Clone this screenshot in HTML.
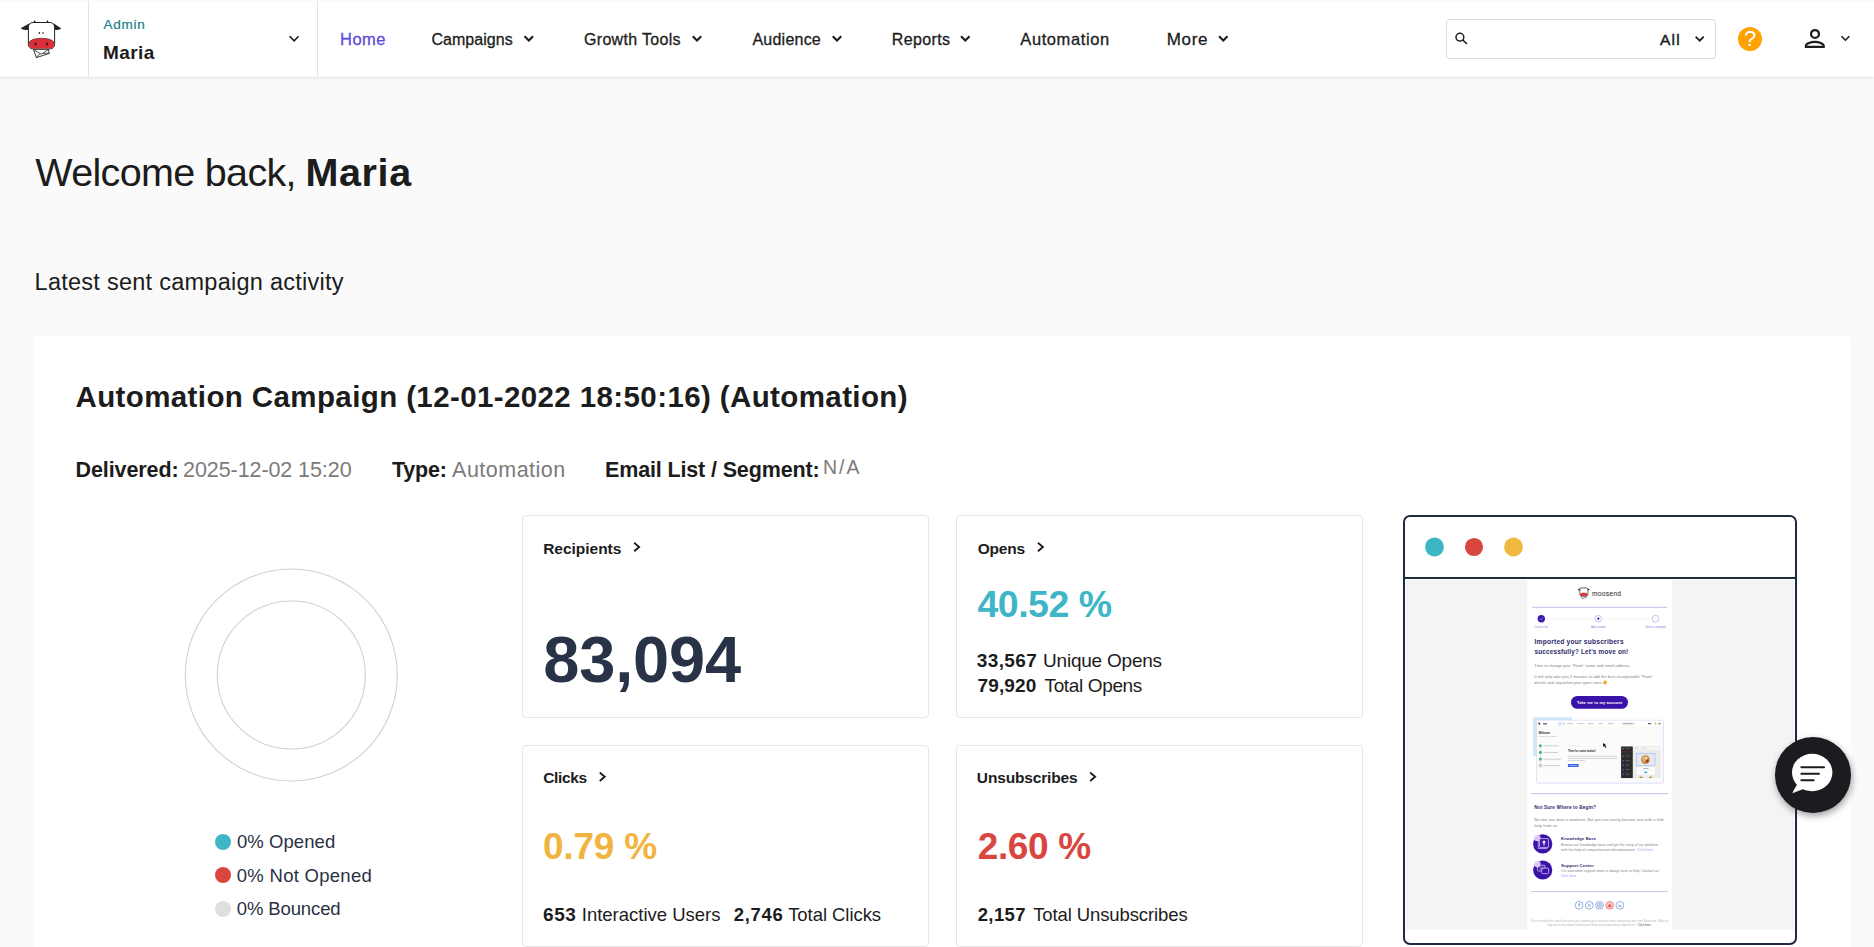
<!DOCTYPE html>
<html lang="en">
<head>
<meta charset="utf-8">
<title>Moosend - Home</title>
<style>
*{box-sizing:border-box}
html,body{margin:0;padding:0}
body{width:1874px;height:947px;overflow:hidden;background:#fafafa;font-family:"Liberation Sans",sans-serif;position:relative;color:#1c1c1c}
.abs{position:absolute}
.t{position:absolute;white-space:nowrap}
#hdr{position:absolute;left:0;top:0;width:1874px;height:77px;background:#fff;box-shadow:0 1px 2px rgba(0,0,0,.07),0 2px 5px rgba(0,0,0,.03);border-top:1px solid #fff7f5}
.vd{position:absolute;top:1px;width:1px;height:76px;background:#e2e2e2}
#search{position:absolute;left:1446px;top:19px;width:270px;height:40px;border:1px solid #dcdcdc;border-radius:3px;background:#fff}
#help{position:absolute;left:1738px;top:27px;width:24px;height:24px;border-radius:50%;background:#ffa200}
#main{position:absolute;left:34px;top:336px;width:1817px;height:640px;background:#fff;border-radius:3px}
.card{position:absolute;width:407px;height:202px;border:1px solid #e6e6e6;border-radius:4px;background:#fff}
.dot{position:absolute;width:16px;height:16px;border-radius:50%}
#frame{position:absolute;left:1403px;top:515px;width:394px;height:430px;border:2px solid #212b40;border-radius:7px;background:#fff;overflow:hidden}
#chat{position:absolute;left:1775.2px;top:737.1px;width:75.6px;height:75.6px;border-radius:50%;background:#1b1c20;box-shadow:1px 3px 7px rgba(0,0,0,.38)}
</style>
</head>
<body>
<div id="hdr"></div>
<div class="vd" style="left:88px"></div>
<div class="vd" style="left:317px"></div>
<svg class="abs" style="left:16px;top:16px" width="50" height="46" viewBox="16 16 50 46">
<path d="M29.6 23.2 L20.6 28.3 Q23 30.4 28.2 29.8 Z" fill="#222"/>
<path d="M53.4 23.2 L61.4 28.6 Q59 30.4 54.8 29.8 Z" fill="#222"/>
<path d="M33.1 22.6 Q34.2 21.6 34.5 19.9 Q35.6 21.6 36.4 22.6 Z M45.9 22.6 Q46.9 21.6 47.4 19.9 Q48.2 21.6 49.2 22.6 Z" fill="#222"/>
<path d="M33.4 49.2 L36.4 57.6 L49.4 53.4 L48.2 49.2 Z" fill="#fff" stroke="#222" stroke-width="0.9" stroke-linejoin="round"/>
<path d="M34.2 50 L41.2 54.2 L48.4 49.6 M36.4 57.4 L40.2 53.6 M49.2 53.2 L42.6 53.4" fill="none" stroke="#222" stroke-width="0.8"/>
<rect x="28.4" y="22.5" width="26.2" height="26.4" rx="4.5" ry="4.5" fill="#fff" stroke="#222" stroke-width="1"/>
<path d="M28.9 43.5 C28.9 36.6 54.1 36.6 54.1 43.5 L54.1 44.6 Q54.1 48.4 50 48.4 L33 48.4 Q28.9 48.4 28.9 44.6 Z" fill="#dc3039"/>
<path d="M28.9 43.2 C29.4 36.6 53.6 36.6 54.1 43.2" fill="none" stroke="#4a1a1c" stroke-width="0.6"/>
<ellipse cx="35.6" cy="44" rx="1" ry="1.6" fill="#3a1414" transform="rotate(-20 35.6 44)"/>
<ellipse cx="47" cy="44" rx="1" ry="1.6" fill="#3a1414" transform="rotate(20 47 44)"/>
<ellipse cx="39.4" cy="33" rx="0.7" ry="0.9" fill="#222"/>
<ellipse cx="43" cy="33" rx="0.7" ry="0.9" fill="#222"/>
</svg>

<div id="search"></div>
<svg class="abs" style="left:1452px;top:30px" width="18" height="18" viewBox="1452 30 18 18"><circle cx="1459.9" cy="37.2" r="3.9" fill="none" stroke="#1c1c1c" stroke-width="1.5"/><path d="M1462.8 40 L1467 44" stroke="#1c1c1c" stroke-width="1.6" stroke-linecap="butt"/></svg>

<div id="help"></div>
<span class="t" style="left:1738px;top:27px;width:24px;height:24px;text-align:center;font:400 22px/24.5px 'Liberation Sans',sans-serif;color:#fff">?</span>

<svg class="abs" style="left:1800px;top:26px" width="30" height="26" viewBox="1800 26 30 26"><circle cx="1815" cy="33.95" r="3.95" fill="none" stroke="#1c1c1c" stroke-width="2.25"/><path d="M1805.85 46.85 L1805.85 45.7 C1805.85 43.6 1811 41.85 1814.8 41.85 C1818.6 41.85 1823.75 43.6 1823.75 45.7 L1823.75 46.85 Z" fill="none" stroke="#1c1c1c" stroke-width="2.1" stroke-linejoin="miter"/></svg>

<div id="main"></div>
<svg class="abs" style="left:180px;top:563px" width="224" height="224" viewBox="180 563 224 224"><circle cx="291.3" cy="675" r="106" fill="none" stroke="#cfd2d2" stroke-width="1.1"/><circle cx="291.3" cy="675" r="74" fill="none" stroke="#cfd2d2" stroke-width="1.1"/></svg>

<div class="dot" style="left:215px;top:834px;background:#40b5c6"></div>
<div class="dot" style="left:215px;top:867px;background:#d9463f"></div>
<div class="dot" style="left:215px;top:901px;background:#dfdfdf"></div>
<div class="card" style="left:522px;top:515px;height:203px"></div>
<div class="card" style="left:956px;top:515px;height:203px"></div>
<div class="card" style="left:522px;top:745px"></div>
<div class="card" style="left:956px;top:745px"></div>
<div id="frame"></div>
<svg class="abs" style="left:1405px;top:517px" width="390" height="426" viewBox="1405 517 390 426" font-family="'Liberation Sans',sans-serif">
<circle cx="1434.50" cy="547.00" r="9.40" fill="#3fb6c6"/>
<circle cx="1474.00" cy="547.00" r="9.10" fill="#d9463f"/>
<circle cx="1513.50" cy="547.00" r="9.40" fill="#f0b840"/>
<rect x="1405.00" y="577.00" width="390.00" height="2.00" fill="#212b40"/>
<rect x="1406.00" y="580.00" width="388.00" height="349.70" fill="#f4f4f4"/>
<rect x="1527.20" y="580.00" width="144.80" height="349.70" fill="#ffffff"/>
<g transform="translate(1577.3,586.9) scale(0.305)"><g transform="translate(-20,-19)"><path d="M29.6 23.200 L20.6 28.300 Q23 30.400 28.200 29.800 Z M53.4 23.200 L61.4 28.600 Q59 30.400 54.800 29.800 Z M33.6 22.400 L34.6 20 L35.9 22.400 Z M46.2 22.400 L47.3 20 L48.6 22.400 Z" fill="#222"/><path d="M33.4 49.200 L36.4 57.600 L49.4 53.400 L48.2 49.200 Z" fill="#fff" stroke="#222" stroke-width="1.6"/><rect x="28.400" y="22.500" width="26.200" height="26.400" rx="4.500" fill="#fff" stroke="#222" stroke-width="2.2"/><path d="M28.900 43.500 C28.900 36.500 54.100 36.500 54.100 43.500 L54.100 44.600 Q54.100 48.400 50 48.400 L33 48.400 Q28.900 48.400 28.900 44.600 Z" fill="#dc3039"/></g></g>
<text transform="translate(1591.90 595.80) scale(0.1250)" font-size="53.94" fill="#222" font-weight="400" textLength="233.60" lengthAdjust="spacing">moosend</text>
<rect x="1532.00" y="606.70" width="135.00" height="1.20" fill="#cfc5f5"/>
<path d="M1547.50 618.70 L1592.00 618.70" stroke="#ebebeb" stroke-width="0.70" fill="none"/>
<path d="M1604.50 618.70 L1649.00 618.70" stroke="#ebebeb" stroke-width="0.70" fill="none"/>
<circle cx="1541.30" cy="618.70" r="3.70" fill="#3a18ae"/>
<path d="M1539.7 618.8 L1540.9 620 L1543 617.6" stroke="#b9a8f0" stroke-width="0.6" fill="none"/>
<circle cx="1598.30" cy="618.70" r="3.40" fill="#fff" stroke="#b7a6ee" stroke-width="0.70"/>
<circle cx="1598.30" cy="618.70" r="1.10" fill="#3a18ae"/>
<circle cx="1655.50" cy="618.70" r="3.40" fill="#fff" stroke="#b7a6ee" stroke-width="0.70"/>
<text transform="translate(1534.30 627.60) scale(0.1250)" font-size="20.40" fill="#8f7fe3" font-weight="400" textLength="109.60" lengthAdjust="spacing">Create a list</text>
<text transform="translate(1590.90 627.60) scale(0.1250)" font-size="20.40" fill="#8f7fe3" font-weight="400" textLength="120.00" lengthAdjust="spacing">Add a sender</text>
<text transform="translate(1645.20 627.60) scale(0.1250)" font-size="20.40" fill="#8f7fe3" font-weight="400" textLength="165.60" lengthAdjust="spacing">Send a campaign</text>
<text transform="translate(1534.50 643.80) scale(0.1250)" font-size="53.45" fill="#2b2a6b" font-weight="700" textLength="712.80" lengthAdjust="spacing">Imported your subscribers</text>
<text transform="translate(1534.50 653.90) scale(0.1250)" font-size="51.20" fill="#2b2a6b" font-weight="700" textLength="749.60" lengthAdjust="spacing">successfully? Let&#x27;s move on!</text>
<text transform="translate(1534.30 666.60) scale(0.1250)" font-size="30.65" fill="#7d7d7d" font-weight="400" textLength="771.20" lengthAdjust="spacing">Time to change your &quot;From&quot; name and email address.</text>
<text transform="translate(1534.30 678.10) scale(0.1250)" font-size="30.93" fill="#7d7d7d" font-weight="400" textLength="949.60" lengthAdjust="spacing">It will only take you 2 minutes to add the best recognizable &quot;From&quot;</text>
<text transform="translate(1534.30 683.70) scale(0.1250)" font-size="30.92" fill="#7d7d7d" font-weight="400" textLength="539.20" lengthAdjust="spacing">details and skyrocket your open rates</text>
<circle cx="1605.00" cy="682.50" r="1.90" fill="#f3a63a"/>
<rect x="1571.00" y="696.00" width="57.00" height="12.80" fill="#3a12a8" rx="6.40"/>
<text transform="translate(1577.00 704.20) scale(0.1250)" font-size="31.20" fill="#ffffff" font-weight="700" textLength="360.80" lengthAdjust="spacing">Take me to my account</text>
<rect x="1533.00" y="717.20" width="38.90" height="39.20" fill="#cfe8fc" rx="1.60"/>
<rect x="1536.60" y="720.30" width="126.80" height="62.90" fill="#fbfbfb" rx="1.20" stroke="#ddd6fa" stroke-width="0.80"/>
<rect x="1537.00" y="720.70" width="126.00" height="6.10" fill="#ffffff"/>
<path d="M1537.00 726.90 L1663.00 726.90" stroke="#efefef" stroke-width="0.30" fill="none"/>
<circle cx="1539.30" cy="723.60" r="1.10" fill="#6b3a3a"/>
<rect x="1543.00" y="723.20" width="4.00" height="1.20" fill="#555"/>
<rect x="1558.00" y="722.20" width="3.20" height="3.10" fill="#cfe0fb"/>
<rect x="1561.80" y="722.20" width="3.20" height="3.10" fill="#dfe9fb"/>
<rect x="1566.70" y="723.30" width="6.30" height="0.80" fill="#bdbdbd"/>
<rect x="1577.00" y="723.30" width="7.50" height="0.80" fill="#bdbdbd"/>
<rect x="1587.50" y="723.30" width="6.00" height="0.80" fill="#bdbdbd"/>
<rect x="1598.00" y="723.30" width="5.00" height="0.80" fill="#bdbdbd"/>
<rect x="1608.00" y="723.30" width="6.00" height="0.80" fill="#bdbdbd"/>
<rect x="1622.00" y="722.20" width="13.00" height="3.00" fill="#f4f4f4" rx="0.40" stroke="#e2e2e2" stroke-width="0.20"/>
<rect x="1623.00" y="723.30" width="10.00" height="0.80" fill="#9a9a9a"/>
<rect x="1648.00" y="723.00" width="3.00" height="1.30" fill="#666"/>
<circle cx="1655.60" cy="723.70" r="0.90" fill="#f5a623"/>
<rect x="1658.40" y="723.00" width="2.20" height="1.40" fill="#777"/>
<text transform="translate(1538.80 733.60) scale(0.1250)" font-size="21.08" fill="#222" font-weight="700" textLength="89.60" lengthAdjust="spacing">Welcome</text>
<text transform="translate(1538.80 736.90) scale(0.1250)" font-size="12.92" fill="#999" font-weight="400" textLength="145.60" lengthAdjust="spacing">Let&#x27;s help you get started!</text>
<path d="M1540.40 745.80 L1540.40 765.60" stroke="#9fb7d9" stroke-width="0.30" fill="none"/>
<circle cx="1540.40" cy="745.80" r="1.55" fill="#4db37e"/>
<circle cx="1540.40" cy="752.40" r="1.55" fill="#4db37e"/>
<circle cx="1540.40" cy="759.10" r="1.55" fill="#4db37e"/>
<circle cx="1540.40" cy="765.60" r="1.30" fill="#f4f4f4" stroke="#777" stroke-width="0.50"/>
<rect x="1543.20" y="745.45" width="15.80" height="0.80" fill="#c4c4c4"/>
<rect x="1543.20" y="752.05" width="14.80" height="0.80" fill="#c4c4c4"/>
<rect x="1543.20" y="758.75" width="17.80" height="0.80" fill="#c4c4c4"/>
<rect x="1543.20" y="765.25" width="16.30" height="0.80" fill="#c4c4c4"/>
<rect x="1568.00" y="745.60" width="13.00" height="0.70" fill="#e6e6e6"/>
<text transform="translate(1567.90 751.60) scale(0.1250)" font-size="22.44" fill="#2a2a2a" font-weight="700" textLength="223.20" lengthAdjust="spacing">Time for some action!</text>
<rect x="1567.90" y="755.85" width="49.10" height="0.75" fill="#c9c9c9"/>
<rect x="1567.90" y="757.95" width="49.70" height="0.75" fill="#c9c9c9"/>
<rect x="1567.90" y="759.95" width="17.40" height="0.75" fill="#c9c9c9"/>
<rect x="1567.90" y="764.00" width="10.70" height="3.00" fill="#3d63e6" rx="0.30"/>
<rect x="1569.20" y="765.20" width="8.00" height="0.60" fill="#c9d4fb"/>
<path d="M1603 742.9 L1603 746.9 L1604.1 745.9 L1605.7 748 L1606.5 747.4 L1605 745.4 L1606.6 745.2 Z" fill="#1a1a1a"/>
<rect x="1620.60" y="746.00" width="39.80" height="32.60" fill="#000" rx="0.60" opacity="0.10"/>
<rect x="1621.10" y="746.40" width="38.80" height="31.60" fill="#ececec" rx="0.40"/>
<rect x="1621.10" y="746.40" width="11.70" height="31.60" fill="#2b2b2d" rx="0.40"/>
<rect x="1622.60" y="748.00" width="1.40" height="1.10" fill="#3f74c9"/>
<rect x="1625.50" y="748.20" width="4.00" height="0.60" fill="#777"/>
<rect x="1622.60" y="751.10" width="1.40" height="1.10" fill="#3f74c9"/>
<rect x="1625.50" y="751.30" width="4.00" height="0.60" fill="#777"/>
<rect x="1622.60" y="755.50" width="1.40" height="1.10" fill="#3f74c9"/>
<rect x="1625.50" y="755.70" width="4.00" height="0.60" fill="#777"/>
<rect x="1622.60" y="760.10" width="1.40" height="1.10" fill="#3f74c9"/>
<rect x="1625.50" y="760.30" width="4.00" height="0.60" fill="#777"/>
<rect x="1622.60" y="764.50" width="1.40" height="1.10" fill="#3f74c9"/>
<rect x="1625.50" y="764.70" width="4.00" height="0.60" fill="#777"/>
<rect x="1622.60" y="769.00" width="1.40" height="1.10" fill="#3f74c9"/>
<rect x="1625.50" y="769.20" width="4.00" height="0.60" fill="#777"/>
<rect x="1622.60" y="773.50" width="1.40" height="1.10" fill="#3f74c9"/>
<rect x="1625.50" y="773.70" width="4.00" height="0.60" fill="#777"/>
<rect x="1622.00" y="750.60" width="9.00" height="2.00" fill="#4a2a2a"/>
<rect x="1633.00" y="746.60" width="26.60" height="3.20" fill="#f6f6f6"/>
<rect x="1634.50" y="747.80" width="4.00" height="0.70" fill="#f2b36a"/>
<rect x="1641.00" y="747.80" width="5.00" height="0.70" fill="#c9c9c9"/>
<rect x="1636.20" y="753.20" width="18.80" height="12.60" fill="#e3e8f4" stroke="#8fb0ee" stroke-width="0.50"/>
<circle cx="1645.40" cy="759.60" r="4.40" fill="#c98a3a"/>
<circle cx="1644.60" cy="758.80" r="2.60" fill="#e0b060"/>
<circle cx="1647.20" cy="761.00" r="1.50" fill="#7b4a22"/>
<circle cx="1646.20" cy="758.00" r="1.20" fill="#f0e3c9"/>
<rect x="1636.80" y="767.40" width="18.20" height="7.20" fill="#ffffff"/>
<rect x="1643.20" y="768.20" width="5.40" height="0.60" fill="#888"/>
<rect x="1638.50" y="770.00" width="15.00" height="0.40" fill="#ddd"/>
<rect x="1644.20" y="771.60" width="3.20" height="1.60" fill="#3fb6c6"/>
<circle cx="1641.00" cy="778.20" r="1.80" fill="#b5802f"/>
<circle cx="1650.60" cy="778.20" r="1.80" fill="#b5802f"/>
<rect x="1633.00" y="778.00" width="27.00" height="2.00" fill="#fbfbfb"/>
<rect x="1531.00" y="793.00" width="137.00" height="1.20" fill="#cfc5f5"/>
<text transform="translate(1534.30 808.90) scale(0.1250)" font-size="37.85" fill="#2b2a6b" font-weight="700" textLength="493.60" lengthAdjust="spacing">Not Sure Where to Begin?</text>
<text transform="translate(1534.30 821.00) scale(0.1250)" font-size="30.84" fill="#7d7d7d" font-weight="400" textLength="1037.60" lengthAdjust="spacing">No one was born a marketer. But you can easily become one with a little</text>
<text transform="translate(1534.30 826.80) scale(0.1250)" font-size="31.42" fill="#7d7d7d" font-weight="400" textLength="191.20" lengthAdjust="spacing">help from us.</text>
<circle cx="1542.70" cy="843.90" r="9.60" fill="#3a12a8"/>
<circle cx="1537.30" cy="838.00" r="3.3" fill="#ecd2fb" opacity="0.92"/>
<circle cx="1542.70" cy="870.00" r="9.60" fill="#3a12a8"/>
<circle cx="1537.30" cy="864.10" r="3.3" fill="#ecd2fb" opacity="0.92"/>
<rect x="1538.30" y="839.60" width="8.90" height="9.00" fill="none" rx="0.50" stroke="#e9dcfb" stroke-width="0.70"/>
<rect x="1539.60" y="838.60" width="8.80" height="8.80" fill="#3a12a8" rx="0.50" stroke="#e9dcfb" stroke-width="0.70"/>
<circle cx="1544.00" cy="842.00" r="1.60" fill="#e9dcfb"/>
<rect x="1543.40" y="843.20" width="1.20" height="2.40" fill="#e9dcfb"/>
<rect x="1537.40" y="865.20" width="7.60" height="5.80" fill="none" rx="1.00" stroke="#e9dcfb" stroke-width="0.70"/>
<rect x="1541.60" y="868.20" width="7.00" height="5.40" fill="#3a12a8" rx="1.00" stroke="#e9dcfb" stroke-width="0.70"/>
<path d="M1539.00 867.20 L1543.50 867.20" stroke="#e9dcfb" stroke-width="0.50" fill="none"/>
<path d="M1539.00 869.00 L1543.50 869.00" stroke="#e9dcfb" stroke-width="0.50" fill="none"/>
<text transform="translate(1561.00 840.40) scale(0.1250)" font-size="33.24" fill="#2b2a6b" font-weight="700" textLength="280.00" lengthAdjust="spacing">Knowledge Base</text>
<text transform="translate(1561.00 846.10) scale(0.1250)" font-size="27.17" fill="#7d7d7d" font-weight="400" textLength="774.40" lengthAdjust="spacing">Browse our knowledge base and get the hang of our platform</text>
<text transform="translate(1561.00 851.00) scale(0.1250)" font-size="27.12" fill="#7d7d7d" font-weight="400" textLength="596.80" lengthAdjust="spacing">with the help of comprehensive documentation.</text>
<text transform="translate(1637.00 851.00) scale(0.1250)" font-size="27.01" fill="#b58cf0" font-weight="400" textLength="126.40" lengthAdjust="spacing">Click here</text>
<text transform="translate(1561.00 866.60) scale(0.1250)" font-size="34.25" fill="#2b2a6b" font-weight="700" textLength="262.40" lengthAdjust="spacing">Support Center</text>
<text transform="translate(1561.00 872.40) scale(0.1250)" font-size="26.86" fill="#7d7d7d" font-weight="400" textLength="787.20" lengthAdjust="spacing">Our awesome support team is always here to help. Contact us!</text>
<text transform="translate(1561.00 877.20) scale(0.1250)" font-size="25.98" fill="#b58cf0" font-weight="400" textLength="121.60" lengthAdjust="spacing">Click here</text>
<rect x="1531.00" y="891.00" width="137.00" height="1.10" fill="#cfc5f5"/>
<circle cx="1579.10" cy="905.30" r="3.90" fill="#fff" stroke="#4f7fc9" stroke-width="0.60"/>
<circle cx="1589.30" cy="905.30" r="3.90" fill="#fff" stroke="#4f7fc9" stroke-width="0.60"/>
<circle cx="1599.50" cy="905.30" r="3.90" fill="#fff" stroke="#4f7fc9" stroke-width="0.60"/>
<circle cx="1609.70" cy="905.30" r="3.90" fill="#f6c9c4" stroke="#e25a4e" stroke-width="0.60"/>
<circle cx="1619.90" cy="905.30" r="3.90" fill="#fff" stroke="#4f7fc9" stroke-width="0.60"/>
<text transform="translate(1578.30 907.10) scale(0.1250)" font-size="36.51" fill="#4f7fc9" font-weight="700" textLength="12.80" lengthAdjust="spacing">f</text>
<path d="M1587.6 903.6 L1591 907 M1591 903.6 L1587.6 907" stroke="#4f7fc9" stroke-width="0.6"/>
<rect x="1597.60" y="903.40" width="3.80" height="3.80" fill="none" rx="1.00" stroke="#4f7fc9" stroke-width="0.60"/>
<circle cx="1599.50" cy="905.30" r="0.90" fill="none" stroke="#4f7fc9" stroke-width="0.50"/>
<path d="M1607.6 907 L1609.7 903.4 L1611.8 907 Z" fill="#e25a4e"/>
<text transform="translate(1618.20 906.90) scale(0.1250)" font-size="29.08" fill="#4f7fc9" font-weight="700" textLength="27.20" lengthAdjust="spacing">in</text>
<text transform="translate(1530.80 921.80) scale(0.1250)" font-size="23.05" fill="#b4b4b4" font-weight="400" textLength="1097.60" lengthAdjust="spacing">You received this email because you signed up to receive email marketing tips from Moosend. Want to</text>
<text transform="translate(1547.00 926.20) scale(0.1250)" font-size="22.90" fill="#b4b4b4" font-weight="400" textLength="716.80" lengthAdjust="spacing">stop receiving emails about your Moosend onboarding experience?</text>
<text transform="translate(1638.00 926.20) scale(0.1250)" font-size="21.56" fill="#333" font-weight="400" textLength="107.20" lengthAdjust="spacing">Click here.</text>
</svg>
<div id="chat"></div>
<svg class="abs" style="left:1785px;top:748px" width="56" height="52" viewBox="1785 748 56 52"><ellipse cx="1812.2" cy="772.5" rx="20.2" ry="18.8" fill="#fff"/><path d="M1795.2 781 L1797.6 784.2 L1792.9 792.6 L1803.5 788.6 L1806.5 790.2 Z" fill="#fff" stroke="#fff" stroke-width="0.8" stroke-linejoin="round"/><path d="M1801.4 767.2 H1824 M1801.4 773.8 H1818.9 M1801.4 780.2 H1813.6" stroke="#1b1c20" stroke-width="2.1" stroke-linecap="round" fill="none"/></svg>

<svg class="abs" style="left:287px;top:33px" width="16" height="12" viewBox="0 0 16 12"><path d="M3.20 3.85 L7.10 7.75 L11.00 3.85" fill="none" stroke="#1c1c1c" stroke-width="1.60" stroke-linecap="square" stroke-linejoin="miter"/></svg>
<svg class="abs" style="left:522px;top:33px" width="15" height="12" viewBox="0 0 15 12"><path d="M3.30 3.95 L6.80 7.45 L10.30 3.95" fill="none" stroke="#1c1c1c" stroke-width="2.10" stroke-linecap="square" stroke-linejoin="miter"/></svg>
<svg class="abs" style="left:690px;top:33px" width="15" height="12" viewBox="0 0 15 12"><path d="M3.50 3.95 L7.00 7.45 L10.50 3.95" fill="none" stroke="#1c1c1c" stroke-width="2.10" stroke-linecap="square" stroke-linejoin="miter"/></svg>
<svg class="abs" style="left:830px;top:33px" width="15" height="12" viewBox="0 0 15 12"><path d="M3.50 3.95 L7.00 7.45 L10.50 3.95" fill="none" stroke="#1c1c1c" stroke-width="2.10" stroke-linecap="square" stroke-linejoin="miter"/></svg>
<svg class="abs" style="left:958px;top:33px" width="15" height="12" viewBox="0 0 15 12"><path d="M3.80 3.95 L7.30 7.45 L10.80 3.95" fill="none" stroke="#1c1c1c" stroke-width="2.10" stroke-linecap="square" stroke-linejoin="miter"/></svg>
<svg class="abs" style="left:1216px;top:33px" width="15" height="12" viewBox="0 0 15 12"><path d="M3.80 3.95 L7.30 7.45 L10.80 3.95" fill="none" stroke="#1c1c1c" stroke-width="2.10" stroke-linecap="square" stroke-linejoin="miter"/></svg>
<svg class="abs" style="left:1693px;top:34px" width="15" height="12" viewBox="0 0 15 12"><path d="M3.30 3.30 L6.70 6.70 L10.10 3.30" fill="none" stroke="#1c1c1c" stroke-width="1.80" stroke-linecap="square" stroke-linejoin="miter"/></svg>
<svg class="abs" style="left:1839px;top:33px" width="15" height="12" viewBox="0 0 15 12"><path d="M3.00 3.80 L6.40 7.20 L9.80 3.80" fill="none" stroke="#1c1c1c" stroke-width="1.60" stroke-linecap="square" stroke-linejoin="miter"/></svg>
<svg class="abs" style="left:631px;top:540px" width="13" height="16" viewBox="0 0 13 16"><path d="M3.90 3.45 L8.10 7.05 L3.90 10.65" fill="none" stroke="#1c1c1c" stroke-width="1.90" stroke-linecap="square" stroke-linejoin="miter"/></svg>
<svg class="abs" style="left:1035px;top:540px" width="13" height="16" viewBox="0 0 13 16"><path d="M3.70 3.45 L7.90 7.05 L3.70 10.65" fill="none" stroke="#1c1c1c" stroke-width="1.90" stroke-linecap="square" stroke-linejoin="miter"/></svg>
<svg class="abs" style="left:597px;top:770px" width="13" height="16" viewBox="0 0 13 16"><path d="M3.50 3.10 L7.70 6.70 L3.50 10.30" fill="none" stroke="#1c1c1c" stroke-width="1.90" stroke-linecap="square" stroke-linejoin="miter"/></svg>
<svg class="abs" style="left:1087px;top:770px" width="13" height="16" viewBox="0 0 13 16"><path d="M3.90 3.10 L8.10 6.70 L3.90 10.30" fill="none" stroke="#1c1c1c" stroke-width="1.90" stroke-linecap="square" stroke-linejoin="miter"/></svg>
<span class="t" style="left:103.56px;top:17.57px;font:400 13.5px/13.5px 'Liberation Sans',sans-serif;letter-spacing:0.750px;color:#17808a;-webkit-text-stroke:0.2px #17808a">Admin</span>
<span class="t" style="left:102.89px;top:42.62px;font:700 19.0px/19.0px 'Liberation Sans',sans-serif;letter-spacing:0.450px;color:#1c1c1c">Maria</span>
<span class="t" style="left:340.11px;top:31.03px;font:400 16.5px/16.5px 'Liberation Sans',sans-serif;letter-spacing:0.400px;color:#5b4cdb;-webkit-text-stroke:0.3px #5b4cdb">Home</span>
<span class="t" style="left:431.39px;top:32.46px;font:400 16.0px/16.0px 'Liberation Sans',sans-serif;letter-spacing:0.050px;color:#1c1c1c;-webkit-text-stroke:0.3px #1c1c1c">Campaigns</span>
<span class="t" style="left:584.02px;top:32.46px;font:400 16.0px/16.0px 'Liberation Sans',sans-serif;letter-spacing:0.309px;color:#1c1c1c;-webkit-text-stroke:0.3px #1c1c1c">Growth Tools</span>
<span class="t" style="left:752.44px;top:32.46px;font:400 16.0px/16.0px 'Liberation Sans',sans-serif;letter-spacing:0.229px;color:#1c1c1c;-webkit-text-stroke:0.3px #1c1c1c">Audience</span>
<span class="t" style="left:891.87px;top:32.46px;font:400 16.0px/16.0px 'Liberation Sans',sans-serif;letter-spacing:0.367px;color:#1c1c1c;-webkit-text-stroke:0.3px #1c1c1c">Reports</span>
<span class="t" style="left:1020.29px;top:31.03px;font:400 16.5px/16.5px 'Liberation Sans',sans-serif;letter-spacing:0.600px;color:#1c1c1c;-webkit-text-stroke:0.3px #1c1c1c">Automation</span>
<span class="t" style="left:1166.72px;top:30.61px;font:400 17.0px/17.0px 'Liberation Sans',sans-serif;letter-spacing:0.667px;color:#1c1c1c;-webkit-text-stroke:0.3px #1c1c1c">More</span>
<span class="t" style="left:1660.04px;top:32.08px;font:400 15.5px/15.5px 'Liberation Sans',sans-serif;letter-spacing:1.200px;color:#1c1c1c;-webkit-text-stroke:0.45px #1c1c1c">All</span>
<span class="t" style="left:35.25px;top:153.46px;font:400 39.5px/39.5px 'Liberation Sans',sans-serif;letter-spacing:-0.667px;color:#1c1c1c">Welcome back,</span>
<span class="t" style="left:305.54px;top:153.46px;font:700 39.5px/39.5px 'Liberation Sans',sans-serif;letter-spacing:0.600px;color:#1c1c1c">Maria</span>
<span class="t" style="left:34.60px;top:271.11px;font:400 23.5px/23.5px 'Liberation Sans',sans-serif;letter-spacing:0.257px;color:#1c1c1c">Latest sent campaign activity</span>
<span class="t" style="left:75.45px;top:382.13px;font:700 29.5px/29.5px 'Liberation Sans',sans-serif;letter-spacing:0.392px;color:#1c1c1c">Automation Campaign (12-01-2022 18:50:16) (Automation)</span>
<span class="t" style="left:75.49px;top:460.40px;font:700 21.5px/21.5px 'Liberation Sans',sans-serif;letter-spacing:-0.089px;color:#1c1c1c">Delivered:</span>
<span class="t" style="left:183.06px;top:460.40px;font:400 21.5px/21.5px 'Liberation Sans',sans-serif;letter-spacing:-0.080px;color:#7b7b7b">2025-12-02 15:20</span>
<span class="t" style="left:391.90px;top:460.40px;font:700 21.5px/21.5px 'Liberation Sans',sans-serif;letter-spacing:-0.200px;color:#1c1c1c">Type:</span>
<span class="t" style="left:452.05px;top:460.40px;font:400 21.5px/21.5px 'Liberation Sans',sans-serif;letter-spacing:0.489px;color:#7b7b7b">Automation</span>
<span class="t" style="left:604.99px;top:460.40px;font:700 21.5px/21.5px 'Liberation Sans',sans-serif;letter-spacing:-0.140px;color:#1c1c1c">Email List / Segment:</span>
<span class="t" style="left:822.95px;top:457.69px;font:400 19.5px/19.5px 'Liberation Sans',sans-serif;letter-spacing:2.000px;color:#7b7b7b">N/A</span>
<span class="t" style="left:543.20px;top:540.78px;font:700 15.5px/15.5px 'Liberation Sans',sans-serif;letter-spacing:-0.022px;color:#1c1c1c">Recipients</span>
<span class="t" style="left:543.31px;top:626.58px;font:700 65.0px/65.0px 'Liberation Sans',sans-serif;letter-spacing:-0.200px;color:#283347">83,094</span>
<span class="t" style="left:977.64px;top:540.78px;font:700 15.5px/15.5px 'Liberation Sans',sans-serif;letter-spacing:-0.200px;color:#1c1c1c">Opens</span>
<span class="t" style="left:977.49px;top:585.56px;font:700 37.5px/37.5px 'Liberation Sans',sans-serif;letter-spacing:-0.500px;color:#3fb5c8">40.52 %</span>
<span class="t" style="left:976.84px;top:650.92px;font:700 19.0px/19.0px 'Liberation Sans',sans-serif;letter-spacing:0.360px;color:#1c1c1c">33,567</span>
<span class="t" style="left:1043.05px;top:650.92px;font:400 19.0px/19.0px 'Liberation Sans',sans-serif;letter-spacing:-0.218px;color:#1c1c1c">Unique Opens</span>
<span class="t" style="left:977.44px;top:675.72px;font:700 19.0px/19.0px 'Liberation Sans',sans-serif;letter-spacing:0.160px;color:#1c1c1c">79,920</span>
<span class="t" style="left:1044.53px;top:675.72px;font:400 19.0px/19.0px 'Liberation Sans',sans-serif;letter-spacing:-0.360px;color:#1c1c1c">Total Opens</span>
<span class="t" style="left:543.25px;top:769.68px;font:700 15.5px/15.5px 'Liberation Sans',sans-serif;letter-spacing:-0.360px;color:#1c1c1c">Clicks</span>
<span class="t" style="left:542.95px;top:828.38px;font:700 37.0px/37.0px 'Liberation Sans',sans-serif;letter-spacing:-0.200px;color:#f0b440">0.79 %</span>
<span class="t" style="left:543.10px;top:904.62px;font:700 19.0px/19.0px 'Liberation Sans',sans-serif;letter-spacing:0.500px;color:#1c1c1c">653</span>
<span class="t" style="left:581.80px;top:906.04px;font:400 18.5px/18.5px 'Liberation Sans',sans-serif;letter-spacing:-0.012px;color:#1c1c1c">Interactive Users</span>
<span class="t" style="left:733.71px;top:906.04px;font:700 18.5px/18.5px 'Liberation Sans',sans-serif;letter-spacing:0.700px;color:#1c1c1c">2,746</span>
<span class="t" style="left:788.17px;top:906.04px;font:400 18.5px/18.5px 'Liberation Sans',sans-serif;letter-spacing:-0.055px;color:#1c1c1c">Total Clicks</span>
<span class="t" style="left:976.87px;top:769.68px;font:700 15.5px/15.5px 'Liberation Sans',sans-serif;letter-spacing:-0.164px;color:#1c1c1c">Unsubscribes</span>
<span class="t" style="left:977.73px;top:828.38px;font:700 37.0px/37.0px 'Liberation Sans',sans-serif;letter-spacing:-0.360px;color:#d9453f">2.60 %</span>
<span class="t" style="left:977.67px;top:906.04px;font:700 18.5px/18.5px 'Liberation Sans',sans-serif;letter-spacing:0.400px;color:#1c1c1c">2,157</span>
<span class="t" style="left:1033.15px;top:906.04px;font:400 18.5px/18.5px 'Liberation Sans',sans-serif;letter-spacing:-0.106px;color:#1c1c1c">Total Unsubscribes</span>
<span class="t" style="left:236.92px;top:833.24px;font:400 18.5px/18.5px 'Liberation Sans',sans-serif;letter-spacing:0.075px;color:#2a3142">0% Opened</span>
<span class="t" style="left:236.77px;top:866.94px;font:400 18.5px/18.5px 'Liberation Sans',sans-serif;letter-spacing:0.283px;color:#2a3142">0% Not Opened</span>
<span class="t" style="left:236.72px;top:899.64px;font:400 18.5px/18.5px 'Liberation Sans',sans-serif;letter-spacing:-0.111px;color:#2a3142">0% Bounced</span>
</body>
</html>
